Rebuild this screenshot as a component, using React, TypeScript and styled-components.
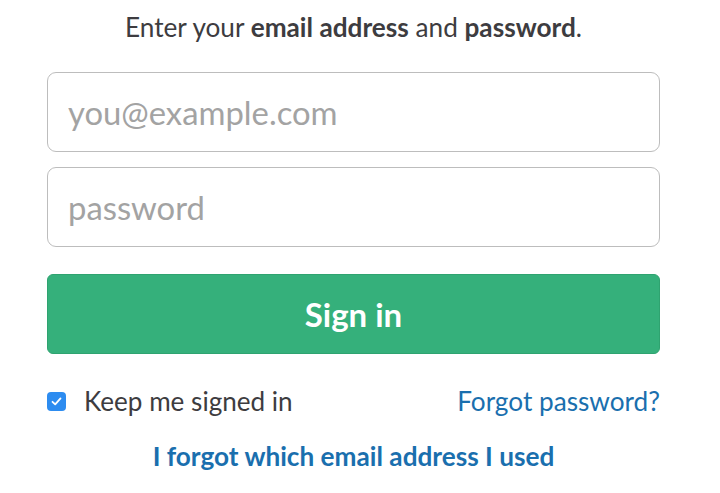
import styled, { createGlobalStyle } from "styled-components";

const Global = createGlobalStyle`
  body {
    margin: 0;
    background: #ffffff;
    font-family: Lato, "Noto Sans", sans-serif;
    color: #3d3c40;
  }
`;

const Page = styled.div`
  width: 613px;
  padding: 10px 0 0 47px;
  display: flex;
  flex-direction: column;
`;

const Intro = styled.p`
  margin: 0 0 28px;
  text-align: center;
  font-size: 26.2px;
  line-height: 34px;
  color: #3d3c40;

  strong {
    font-weight: 700;
  }
`;

const Field = styled.input`
  box-sizing: border-box;
  width: 100%;
  height: 80px;
  margin-bottom: 15px;
  padding: 0 20px;
  border: 1.5px solid #bdbdbd;
  border-radius: 9px;
  font-family: Lato, "Noto Sans", sans-serif;
  font-size: 32.8px;
  color: #3d3c40;
  outline: none;

  &::placeholder {
    color: #a3a3a3;
  }
`;

const SignIn = styled.button`
  box-sizing: border-box;
  width: 100%;
  height: 80px;
  margin-top: 12px;
  border: 1px solid #2fa370;
  border-radius: 6px;
  background: #35b07b;
  color: #ffffff;
  font-family: Lato, "Noto Sans", sans-serif;
  font-size: 33px;
  font-weight: 700;
`;

const Options = styled.div`
  display: flex;
  align-items: center;
  justify-content: space-between;
  margin-top: 31px;
  height: 32px;
`;

const Remember = styled.label`
  display: flex;
  align-items: center;
  gap: 18px;
  font-size: 26.1px;
  color: #3d3c40;
`;

const Box = styled.span`
  width: 19px;
  height: 19px;
  border-radius: 4px;
  background: #2d8cf0;
  display: flex;
  align-items: center;
  justify-content: center;
`;

const Link = styled.a<{ $bold?: boolean }>`
  font-size: 26.2px;
  font-weight: ${(p) => (p.$bold ? 700 : 400)};
  color: #1a6fae;
  text-decoration: none;
`;

const Centered = styled.div`
  margin-top: 23px;
  line-height: 32px;
  text-align: center;
`;

export default function App() {
  return (
    <>
      <Global />
      <Page>
        <Intro>
          Enter your <strong>email address</strong> and <strong>password</strong>.
        </Intro>
        <Field type="email" placeholder="you@example.com" />
        <Field type="password" placeholder="password" />
        <SignIn>Sign in</SignIn>
        <Options>
          <Remember>
            <Box>
              <svg width="13" height="13" viewBox="0 0 13 13">
                <path d="M2.5 6.8 L5.2 9.4 L10.5 3.4" fill="none" stroke="#fff" strokeWidth="1.8" strokeLinecap="round" strokeLinejoin="round" />
              </svg>
            </Box>
            Keep me signed in
          </Remember>
          <Link href="#">Forgot password?</Link>
        </Options>
        <Centered>
          <Link href="#" $bold>
            I forgot which email address I used
          </Link>
        </Centered>
      </Page>
    </>
  );
}
